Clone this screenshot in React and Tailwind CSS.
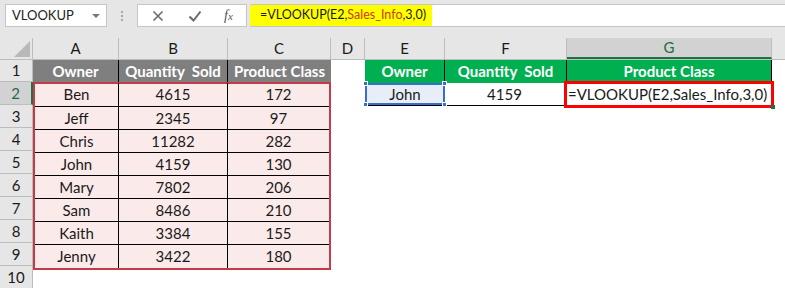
import React from 'react';

const font = { fontFamily: 'Lato, "Liberation Sans", sans-serif' };

const cols = [
  { key: 'A', w: 'w-[86px]' },
  { key: 'B', w: 'w-[109px]' },
  { key: 'C', w: 'w-[103px]' },
  { key: 'D', w: 'w-[34px]' },
  { key: 'E', w: 'w-[80px]' },
  { key: 'F', w: 'w-[122px]' },
  { key: 'G', w: 'w-[205px]' },
];

const sales = [
  ['Ben', '4615', '172'],
  ['Jeff', '2345', '97'],
  ['Chris', '11282', '282'],
  ['John', '4159', '130'],
  ['Mary', '7802', '206'],
  ['Sam', '8486', '210'],
  ['Kaith', '3384', '155'],
  ['Jenny', '3422', '180'],
];

const Handle = ({ pos }) => (
  <span className={`absolute w-[5px] h-[5px] bg-[#3a6fc9] border border-white ${pos}`} />
);

export default function App() {
  return (
    <div className="w-[785px] h-[288px] overflow-hidden bg-white text-[15px] text-[#1a1a1a]" style={font}>
      {/* formula bar */}
      <div className="h-[38px] bg-[#e6e6e6] flex items-start pt-[4px] pl-[5px]">
        <div className="w-[102px] h-[23px] bg-white border border-[#c6c6c6] flex items-center justify-between pl-[6px] pr-[6px] text-[13px] text-[#222]">
          <span>VLOOKUP</span>
          <span className="w-0 h-0 border-l-[4px] border-r-[4px] border-t-[4px] border-l-transparent border-r-transparent border-t-[#777] mt-[1px]" />
        </div>
        <div className="w-[30px] h-[23px] flex flex-col items-center justify-center gap-[2px]">
          <span className="w-[2px] h-[2px] bg-[#a8a8a8]" />
          <span className="w-[2px] h-[2px] bg-[#a8a8a8]" />
          <span className="w-[2px] h-[2px] bg-[#a8a8a8]" />
        </div>
        <div className="w-[110px] h-[23px] bg-white border border-[#c6c6c6] flex items-center pl-[14px]">
          <svg width="12" height="12" viewBox="0 0 12 12"><path d="M1.5 1.5l9 9M10.5 1.5l-9 9" stroke="#6a6a6a" strokeWidth="1.6" /></svg>
          <svg className="ml-[24px]" width="14" height="12" viewBox="0 0 14 12"><path d="M1.5 6.5l4 4L12.5 1.5" stroke="#6a6a6a" strokeWidth="2" fill="none" /></svg>
          <span className="ml-[22px] italic text-[14px] text-[#555]" style={{ fontFamily: '"Liberation Serif", serif' }}>f<span className="text-[11px]">x</span></span>
        </div>
        <div className="flex-1 h-[23px] bg-white border-t border-b border-[#c6c6c6] ml-[3px] flex">
          <div className="bg-[#ffff00] h-full flex items-center pl-[10px] pr-[6px] text-[12.5px]">
            <span>=VLOOKUP(E2,</span>
            <span className="text-[#c83c0c]">Sales_Info</span>
            <span>,3,0)</span>
          </div>
        </div>
      </div>

      {/* column headers */}
      <div className="flex h-[22px] bg-[#e6e6e6] border-b border-[#bdbdbd]">
        <div className="w-[33px] h-full border-r border-[#bdbdbd] flex items-end justify-end pr-[2px] pb-[2px]">
          <svg width="16" height="16" viewBox="0 0 16 16"><path d="M16 0V16H0Z" fill="#b9b9b9" /></svg>
        </div>
        {cols.map((c) => (
          <div
            key={c.key}
            className={`${c.w} h-full flex items-center justify-center border-r ${c.key === 'G' ? 'bg-[#d2d2d2] text-[#1e6b3e] border-[#bdbdbd] border-b-2 border-b-[#1e7145]' : 'border-[#bdbdbd]'}`}
          >
            {c.key}
          </div>
        ))}
        <div className="flex-1" />
      </div>

      <div className="flex">
        {/* row headers */}
        <div className="w-[33px] flex flex-col bg-[#e6e6e6] border-r border-[#bdbdbd]">
          <div className="h-[22px] flex items-center justify-center border-b border-[#bdbdbd]">1</div>
          {[2, 3, 4, 5, 6, 7, 8, 9, 10].map((n) => (
            <div
              key={n}
              className={`h-[23px] flex items-center justify-center border-b border-[#bdbdbd] ${n === 2 ? 'bg-[#d2d2d2] text-[#1e6b3e] border-r-2 border-r-[#1e7145] -mr-[1px]' : ''}`}
            >
              {n}
            </div>
          ))}
        </div>

        <div className="flex flex-col">
          {/* row 1 */}
          <div className="flex h-[23px] font-bold text-white">
            <div className="w-[86px] bg-[#7f7f7f] border-r border-black flex items-center justify-center">Owner</div>
            <div className="w-[109px] bg-[#7f7f7f] border-r border-black flex items-center justify-center whitespace-pre">Quantity  Sold</div>
            <div className="w-[103px] bg-[#7f7f7f] flex items-center justify-center">Product Class</div>
            <div className="w-[34px] bg-white" />
            <div className="w-[80px] bg-[#00b050] border-r border-black flex items-center justify-center">Owner</div>
            <div className="w-[122px] bg-[#00b050] border-r border-black flex items-center justify-center whitespace-pre">Quantity  Sold</div>
            <div className="w-[205px] bg-[#00b050] border-r border-black flex items-center justify-center">Product Class</div>
          </div>

          <div className="flex items-start">
            {/* source table */}
            <div className="w-[298px] border-2 border-[#c43b48] bg-[#fbeaea] -mt-[1px]">
              {sales.map((r, i) => (
                <div key={i} className={`flex h-[23px] ${i < sales.length - 1 ? 'border-b border-black' : ''} ${i === 0 ? '-mt-[1px] h-[24px]' : ''}`}>
                  <div className="w-[84px] border-r border-black flex items-center justify-center">{r[0]}</div>
                  <div className="w-[109px] border-r border-black flex items-center justify-center">{r[1]}</div>
                  <div className="flex-1 flex items-center justify-center">{r[2]}</div>
                </div>
              ))}
            </div>

            <div className="w-[34px]" />

            {/* lookup row */}
            <div className="flex h-[23px] border-b border-black">
              <div className="w-[80px] relative bg-[#e8eef8] border-2 border-[#3a6fc9] flex items-center justify-center">
                John
                <Handle pos="-left-[4px] -top-[4px]" />
                <Handle pos="-right-[4px] -top-[4px]" />
                <Handle pos="-left-[4px] -bottom-[4px]" />
                <Handle pos="-right-[4px] -bottom-[4px]" />
              </div>
              <div className="w-[119px] flex items-center justify-center">4159</div>
              <div className="w-[210px] h-[27px] -mt-[2px] relative border-[3px] border-[#ff0000] flex items-center pl-[1px] whitespace-nowrap">
                =VLOOKUP(E2,Sales_Info,3,0)
                <span className="absolute -right-[4px] -bottom-[4px] w-[4px] h-[4px] bg-[#1e7145]" />
              </div>
            </div>
          </div>
        </div>
      </div>
    </div>
  );
}
